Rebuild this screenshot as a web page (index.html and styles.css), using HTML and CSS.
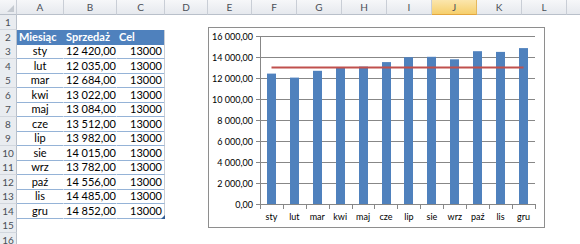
FILE: index.html
```html
<!DOCTYPE html>
<html lang="pl">
<head>
  <meta charset="UTF-8" />
  <title>Sprzedaż - wykres</title>
  <link rel="stylesheet" href="styles.css">
</head>
<body>
  <div class="sheet">
    <div class="col-heads">
      <div class="corner"><span class="corner-tri"></span></div>
      <div class="col-head">A</div>
      <div class="col-head">B</div>
      <div class="col-head">C</div>
      <div class="col-head">D</div>
      <div class="col-head">E</div>
      <div class="col-head">F</div>
      <div class="col-head">G</div>
      <div class="col-head">H</div>
      <div class="col-head">I</div>
      <div class="col-head active">J</div>
      <div class="col-head">K</div>
      <div class="col-head">L</div>
      <div class="col-head"></div>
    </div>

    <div class="row"><div class="row-head">1</div></div>
    <div class="row">
      <div class="row-head">2</div>
      <div class="cell th">Miesiąc</div>
      <div class="cell th">Sprzedaż</div>
      <div class="cell th">Cel</div>
    </div>
    <div class="row"><div class="row-head">3</div><div class="cell td mid">sty</div><div class="cell td num">12 420,00</div><div class="cell td num">13000</div></div>
    <div class="row"><div class="row-head">4</div><div class="cell td mid">lut</div><div class="cell td num">12 035,00</div><div class="cell td num">13000</div></div>
    <div class="row"><div class="row-head">5</div><div class="cell td mid">mar</div><div class="cell td num">12 684,00</div><div class="cell td num">13000</div></div>
    <div class="row"><div class="row-head">6</div><div class="cell td mid">kwi</div><div class="cell td num">13 022,00</div><div class="cell td num">13000</div></div>
    <div class="row"><div class="row-head">7</div><div class="cell td mid">maj</div><div class="cell td num">13 084,00</div><div class="cell td num">13000</div></div>
    <div class="row"><div class="row-head">8</div><div class="cell td mid">cze</div><div class="cell td num">13 512,00</div><div class="cell td num">13000</div></div>
    <div class="row"><div class="row-head">9</div><div class="cell td mid">lip</div><div class="cell td num">13 982,00</div><div class="cell td num">13000</div></div>
    <div class="row"><div class="row-head">10</div><div class="cell td mid">sie</div><div class="cell td num">14 015,00</div><div class="cell td num">13000</div></div>
    <div class="row"><div class="row-head">11</div><div class="cell td mid">wrz</div><div class="cell td num">13 782,00</div><div class="cell td num">13000</div></div>
    <div class="row"><div class="row-head">12</div><div class="cell td mid">paź</div><div class="cell td num">14 556,00</div><div class="cell td num">13000</div></div>
    <div class="row"><div class="row-head">13</div><div class="cell td mid">lis</div><div class="cell td num">14 485,00</div><div class="cell td num">13000</div></div>
    <div class="row"><div class="row-head">14</div><div class="cell td mid">gru</div><div class="cell td num">14 852,00</div><div class="cell td num last">13000<span class="resize"></span></div></div>
    <div class="row"><div class="row-head">15</div></div>
    <div class="row"><div class="row-head">16</div></div>

    <div class="chart">
      <svg width="337" height="201" viewBox="0 0 337 201">
        <g class="grid" shape-rendering="crispEdges">
          <line x1="52" y1="9.5" x2="327" y2="9.5"/>
          <line x1="52" y1="30.5" x2="327" y2="30.5"/>
          <line x1="52" y1="51.5" x2="327" y2="51.5"/>
          <line x1="52" y1="72.5" x2="327" y2="72.5"/>
          <line x1="52" y1="93.5" x2="327" y2="93.5"/>
          <line x1="52" y1="114.5" x2="327" y2="114.5"/>
          <line x1="52" y1="135.5" x2="327" y2="135.5"/>
          <line x1="52" y1="156.5" x2="327" y2="156.5"/>
        </g>
        <g class="ticks" shape-rendering="crispEdges">
          <line x1="48" y1="9.5" x2="52" y2="9.5"/>
          <line x1="48" y1="30.5" x2="52" y2="30.5"/>
          <line x1="48" y1="51.5" x2="52" y2="51.5"/>
          <line x1="48" y1="72.5" x2="52" y2="72.5"/>
          <line x1="48" y1="93.5" x2="52" y2="93.5"/>
          <line x1="48" y1="114.5" x2="52" y2="114.5"/>
          <line x1="48" y1="135.5" x2="52" y2="135.5"/>
          <line x1="48" y1="156.5" x2="52" y2="156.5"/>
          <line x1="48" y1="177.5" x2="52" y2="177.5"/>
          <line x1="52.5" y1="177" x2="52.5" y2="182"/>
          <line x1="75.5" y1="177" x2="75.5" y2="182"/>
          <line x1="98.5" y1="177" x2="98.5" y2="182"/>
          <line x1="121.5" y1="177" x2="121.5" y2="182"/>
          <line x1="144.5" y1="177" x2="144.5" y2="182"/>
          <line x1="166.5" y1="177" x2="166.5" y2="182"/>
          <line x1="189.5" y1="177" x2="189.5" y2="182"/>
          <line x1="212.5" y1="177" x2="212.5" y2="182"/>
          <line x1="235.5" y1="177" x2="235.5" y2="182"/>
          <line x1="258.5" y1="177" x2="258.5" y2="182"/>
          <line x1="281.5" y1="177" x2="281.5" y2="182"/>
          <line x1="304.5" y1="177" x2="304.5" y2="182"/>
          <line x1="327.5" y1="177" x2="327.5" y2="182"/>
        </g>
        <g class="bars">
          <rect x="59" y="46.6" width="9" height="130.4"/>
          <rect x="82" y="50.6" width="9" height="126.4"/>
          <rect x="105" y="43.8" width="9" height="133.2"/>
          <rect x="128" y="40.3" width="9" height="136.7"/>
          <rect x="151" y="39.6" width="9" height="137.4"/>
          <rect x="174" y="35.1" width="9" height="141.9"/>
          <rect x="196" y="30.2" width="9" height="146.8"/>
          <rect x="219" y="29.8" width="9" height="147.2"/>
          <rect x="242" y="32.3" width="9" height="144.7"/>
          <rect x="265" y="24.2" width="9" height="152.8"/>
          <rect x="288" y="24.9" width="9" height="152.1"/>
          <rect x="311" y="21.1" width="9" height="155.9"/>
        </g>
        <g class="axis" shape-rendering="crispEdges">
          <line x1="52.5" y1="9" x2="52.5" y2="177"/>
          <line x1="52" y1="177.5" x2="327" y2="177.5"/>
        </g>
        <line class="target" x1="63.5" y1="40.5" x2="315.5" y2="40.5"/>
        <g class="y-labels">
          <text x="45" y="12.5">16 000,00</text>
          <text x="45" y="33.5">14 000,00</text>
          <text x="45" y="54.5">12 000,00</text>
          <text x="45" y="75.5">10 000,00</text>
          <text x="45" y="96.5">8 000,00</text>
          <text x="45" y="117.5">6 000,00</text>
          <text x="45" y="138.5">4 000,00</text>
          <text x="45" y="159.5">2 000,00</text>
          <text x="45" y="180.5">0,00</text>
        </g>
        <g class="x-labels">
          <text x="63.5" y="193">sty</text>
          <text x="86.4" y="193">lut</text>
          <text x="109.3" y="193">mar</text>
          <text x="132.2" y="193">kwi</text>
          <text x="155.1" y="193">maj</text>
          <text x="178" y="193">cze</text>
          <text x="201" y="193">lip</text>
          <text x="223.9" y="193">sie</text>
          <text x="246.8" y="193">wrz</text>
          <text x="269.7" y="193">paź</text>
          <text x="292.6" y="193">lis</text>
          <text x="315.5" y="193">gru</text>
        </g>
      </svg>
    </div>
  </div>
</body>
</html>
```

FILE: styles.css
```css
body {
  margin: 0;
  background: #ffffff;
  font-family: Lato, "Liberation Sans", sans-serif;
  overflow: hidden;
}
.sheet {
  position: relative;
  width: 580px;
  height: 244px;
  overflow: hidden;
}
.col-heads {
  display: grid;
  grid-template-columns: 17px 47px 53px 48px 43px 44px repeat(7, 45px) 30px;
  height: 15px;
}
.col-heads > div {
  box-sizing: border-box;
  background: linear-gradient(#f6f7f9, #e6e9ee);
  border-right: 1px solid #c9ced6;
  border-bottom: 1px solid #b9c0ca;
  color: #4a4f57;
  font-size: 10px;
  line-height: 14px;
  text-align: center;
}
.corner {
  position: relative;
}
.corner-tri {
  position: absolute;
  right: 2px;
  bottom: 2px;
  width: 0;
  height: 0;
  border-left: 7px solid transparent;
  border-bottom: 7px solid #c4c9d0;
}
.col-heads > .active {
  background: linear-gradient(#fbe6ad, #f6cf6c);
  border-bottom: 1px solid #e3a63f;
  border-right: 1px solid #e5b85e;
}
.row {
  display: grid;
  grid-template-columns: 17px 47px 53px 48px;
  height: 14.5px;
}
.row-head {
  box-sizing: border-box;
  background: #e9ecf0;
  border-right: 1px solid #b9c0ca;
  border-bottom: 1px solid #d2d7de;
  color: #4a4f57;
  font-size: 10px;
  line-height: 14px;
  text-align: center;
}
.cell {
  box-sizing: border-box;
  font-size: 11px;
  line-height: 14px;
  padding: 0 2px;
  white-space: nowrap;
  border-right: 1px solid transparent;
}
.th {
  background: #4f81bd;
  color: #ffffff;
  font-weight: bold;
  border-bottom: 1px solid #4f81bd;
}
.td {
  color: #000000;
  border-bottom: 1px solid #95b3d7;
}
.mid {
  text-align: center;
}
.num {
  text-align: right;
}
.row > .cell:last-child {
  border-right: 1px solid #c9ced6;
}
.last {
  position: relative;
}
.resize {
  position: absolute;
  right: -1px;
  bottom: -1px;
  width: 0;
  height: 0;
  border-left: 4px solid transparent;
  border-bottom: 4px solid #2f5c95;
}
.chart {
  position: absolute;
  left: 208px;
  top: 27px;
  width: 337px;
  height: 201px;
  box-sizing: border-box;
  border: 1px solid #8e8e8e;
  background: #ffffff;
}
.chart svg {
  position: absolute;
  left: -1px;
  top: -1px;
  display: block;
}
.grid line,
.ticks line,
.axis line {
  stroke: #878787;
  stroke-width: 1;
}
.bars rect {
  fill: #4f81bd;
}
.target {
  stroke: #c0504d;
  stroke-width: 2.2;
}
.y-labels text,
.x-labels text {
  font-family: Lato, "Liberation Sans", sans-serif;
  font-size: 9px;
  fill: #000000;
}
.y-labels text {
  text-anchor: end;
}
.x-labels text {
  text-anchor: middle;
}
```
